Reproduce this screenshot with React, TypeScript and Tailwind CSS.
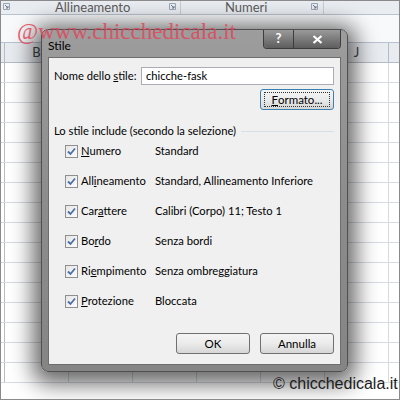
import React from 'react'

const ui = { fontFamily: 'Lato, "Noto Sans", sans-serif' }

function Check() {
  return (
    <span className="flex h-[13px] w-[13px] shrink-0 items-center justify-center border border-[#8f8f8f] bg-gradient-to-br from-[#e6e6e6] to-[#fbfbfb]">
      <svg width="9" height="9" viewBox="0 0 9 9">
        <path d="M1 4.5 L3.5 7 L8 1.5" fill="none" stroke="#4a6fa5" strokeWidth="1.8" />
      </svg>
    </span>
  )
}

function Btn({ children, focus = false, className = '' }: { children: React.ReactNode; focus?: boolean; className?: string }) {
  return (
    <div
      className={`flex h-[21px] items-center justify-center rounded-[3px] border bg-gradient-to-b from-[#f4f4f4] via-[#ebebeb] to-[#d6d6d6] text-[11.5px] text-black ${focus ? 'border-[#3c7fb1]' : 'border-[#707070]'} ${className}`}
    >
      {focus ? (
        <span className="flex h-[15px] w-[66px] items-center justify-center border border-dotted border-[#333]">{children}</span>
      ) : (
        children
      )}
    </div>
  )
}

const rows: { pre: string; u: string; post: string; value: string }[] = [
  { pre: '', u: 'N', post: 'umero', value: 'Standard' },
  { pre: 'All', u: 'i', post: 'neamento', value: 'Standard, Allineamento Inferiore' },
  { pre: 'Car', u: 'a', post: 'ttere', value: 'Calibri (Corpo) 11; Testo 1' },
  { pre: 'Bo', u: 'r', post: 'do', value: 'Senza bordi' },
  { pre: 'Ri', u: 'e', post: 'mpimento', value: 'Senza ombreggiatura' },
  { pre: '', u: 'P', post: 'rotezione', value: 'Bloccata' },
]

function Launcher() {
  return (
    <svg width="7" height="7" viewBox="0 0 7 7">
      <path d="M0.5 0.5 H6.5 V6.5 H0.5 Z" fill="none" stroke="#9aa6b4" />
      <path d="M2 2 L5 5 M5 3 V5 H3" fill="none" stroke="#6c7a8a" />
    </svg>
  )
}

export default function App() {
  const gridRows = Array.from({ length: 16 })
  const cols = [64, 64, 64, 64, 64, 64]

  return (
    <div className="relative h-[400px] w-[400px] overflow-hidden border border-[#8a8a8a] bg-white" style={ui}>
      {/* ribbon */}
      <div className="flex h-[14px] border-b border-[#b9c3cf] bg-[#e9edf2] text-[13px] leading-[12px] text-[#5b5b5b]">
        <div className="flex w-[180px] items-start border-r border-[#c5ccd5]">
          <div className="ml-[2px] mt-[2px]"><Launcher /></div>
          <span className="ml-[45px] whitespace-nowrap">Allineamento</span>
          <div className="ml-auto mr-[4px] mt-[2px]"><Launcher /></div>
        </div>
        <div className="flex w-[143px] items-start border-r border-[#c5ccd5]">
          <span className="ml-[44px]">Numeri</span>
          <div className="ml-auto mr-[5px] mt-[2px]"><Launcher /></div>
        </div>
      </div>
      <div className="h-[28px] border-b border-[#b9c3cf] bg-[#f8f9fa]" />
      {/* column headers */}
      <div className="flex h-[20px] border-b border-[#b4bcc7] bg-[#e8ebef] text-[13px] text-[#444]">
        <div className="w-[4px] border-r border-[#b4bcc7]" />
        {cols.map((w, i) => (
          <div key={i} className="flex w-[64px] items-center justify-center border-r border-[#b4bcc7]">
            {i === 0 ? 'B' : i === 5 ? 'J' : ''}
          </div>
        ))}
      </div>
      {/* grid */}
      {gridRows.map((_, r) => (
        <div key={r} className="flex h-[20px] border-b border-[#d6dbe3]">
          <div className="w-[4px] border-r border-[#b4bcc7]" />
          {cols.map((w, i) => (
            <div key={i} className="w-[64px] border-r border-[#d6dbe3]" />
          ))}
        </div>
      ))}

      {/* dialog */}
      <div className="absolute left-[40px] top-[28px] flex h-[343px] w-[307px] flex-col rounded-[7px] border border-[#505050] bg-gradient-to-b from-[#9d9d9d] via-[#8c8c8c] to-[#858585] shadow-[0_4px_22px_8px_rgba(0,0,0,0.6)]">
        <div className="flex h-[27px] shrink-0">
          <span className="ml-[6px] mt-[9px] text-[12px] leading-[14px] text-black">Stile</span>
          <div className="ml-auto mr-[6px] flex h-[19px] overflow-hidden rounded-b-[4px] border border-t-0 border-[#3d3d3d]">
            <div className="flex w-[30px] items-center justify-center border-r border-[#3d3d3d] bg-gradient-to-b from-[#9a9a9a] to-[#5e5e5e] text-[13px] font-bold text-white">?</div>
            <div className="flex w-[46px] items-center justify-center bg-gradient-to-b from-[#9a9a9a] to-[#5e5e5e]">
              <svg width="11" height="9" viewBox="0 0 11 9">
                <path d="M1.5 1 L9.5 8 M9.5 1 L1.5 8" stroke="white" strokeWidth="2.2" />
              </svg>
            </div>
          </div>
        </div>
        <div className="mx-[6px] flex h-[308px] flex-col whitespace-nowrap border border-[#6e6e6e] bg-[#f0f0f0] px-[5px] text-[11.2px] text-black">
          <div className="mt-[9px] flex h-[18px] items-center">
            <span className="w-[87px]">Nome dello <span className="underline">s</span>tile:</span>
            <div className="flex h-[18px] w-[193px] items-center border border-[#abadb3] bg-white pl-[4px]">chicche-fask</div>
          </div>
          <div className="mt-[4px] flex justify-end pr-[1px]">
            <Btn focus className="w-[74px]"><span className="underline">F</span>ormato...</Btn>
          </div>
          <div className="mt-[14px] flex items-center">
            <span className="leading-[14px]">Lo stile include (secondo la selezione)</span>
            <div className="ml-[5px] mr-[1px] h-px flex-1 bg-[#d5dfe5]" />
          </div>
          <div className="-mt-[2px] flex flex-col">
            {rows.map((r, i) => (
              <div key={i} className="flex h-[30px] items-center pl-[11px]">
                <Check />
                <span className="ml-[3px] w-[74px]">
                  {r.pre}
                  <span className="underline">{r.u}</span>
                  {r.post}
                </span>
                <span>{r.value}</span>
              </div>
            ))}
          </div>
          <div className="mt-[17px] flex justify-end gap-[10px] pr-[1px]">
            <Btn className="w-[74px]">OK</Btn>
            <Btn className="w-[74px]">Annulla</Btn>
          </div>
        </div>
      </div>

      {/* watermark */}
      <div
        className="absolute left-[16px] top-[18px] text-[23px] leading-[26px] text-[#e0485c] opacity-85"
        style={{ fontFamily: '"Liberation Serif", serif' }}
      >
        @www.chicchedicala.it
      </div>
      <div
        className="absolute left-[272px] top-[374px] text-[16px] leading-[18px] text-[#1c1c1c]"
        style={{ fontFamily: '"Liberation Sans", Arial, sans-serif' }}
      >
        © chicchedicala.it
      </div>
    </div>
  )
}
